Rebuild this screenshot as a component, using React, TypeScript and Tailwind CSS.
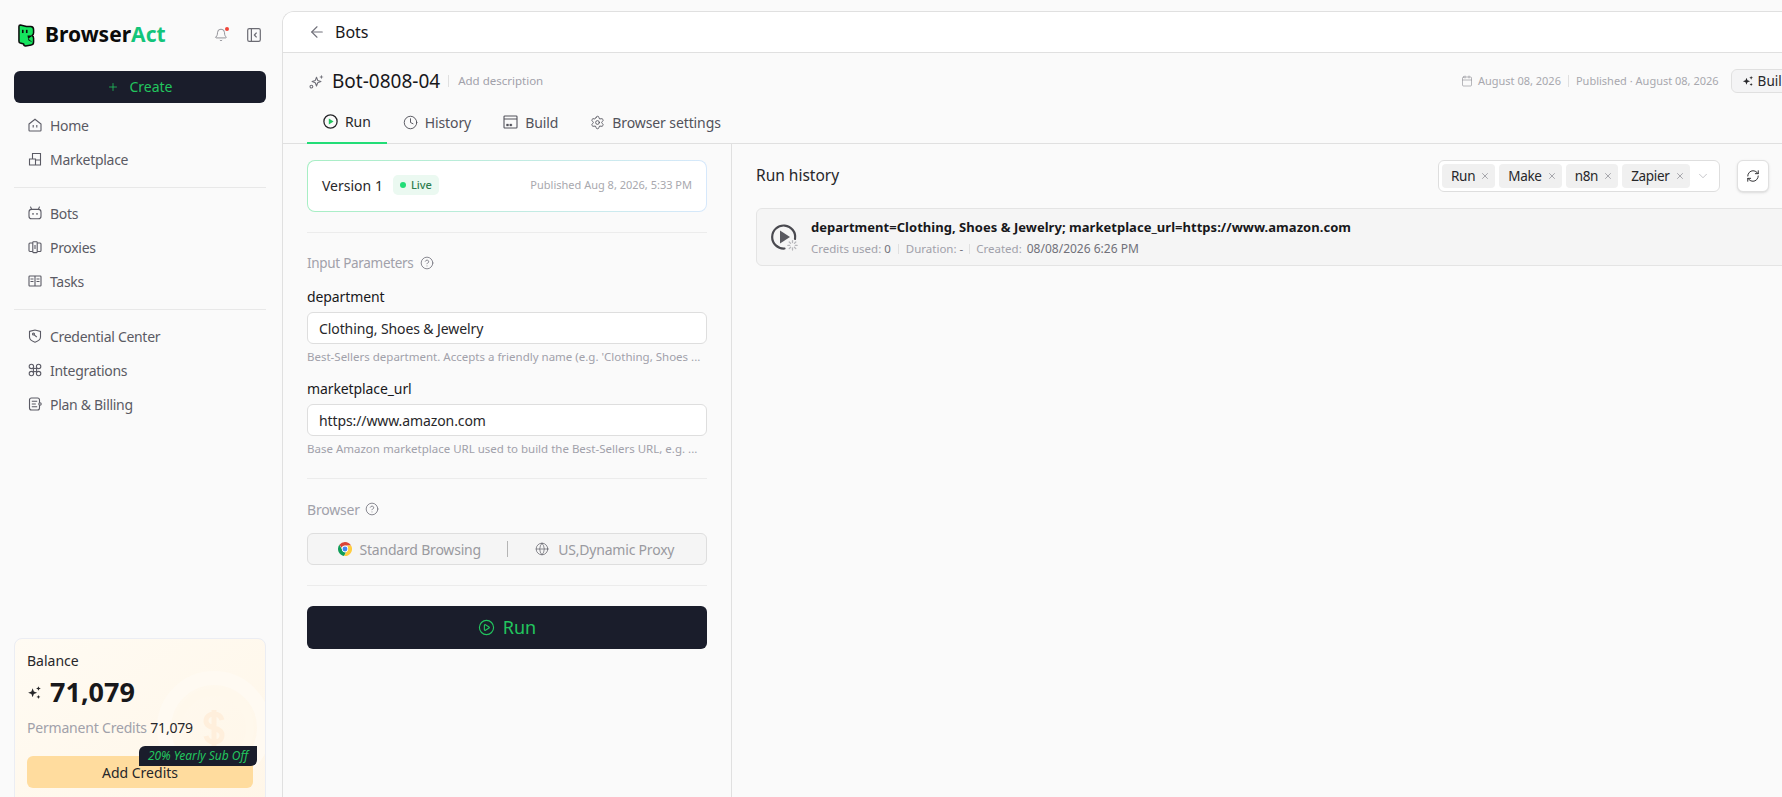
import {
  ArrowLeft,
  Bell,
  Calendar,
  ChevronDown,
  CircleHelp,
  CirclePlay,
  Clock,
  Globe,
  Plus,
  RefreshCw,
  Settings,
  X,
} from "lucide-react";

const Sparkle = ({ className }: { className?: string }) => (
  <svg viewBox="0 0 16 16" className={className} fill="currentColor">
    <path d="M6 3.5 7.3 7 10.8 8.3 7.3 9.6 6 13.1 4.7 9.6 1.2 8.3 4.7 7z" />
    <path d="M12.2 1.2 12.9 3 14.7 3.7 12.9 4.4 12.2 6.2 11.5 4.4 9.7 3.7 11.5 3z" />
    <path d="M12.2 10.6 12.8 12.1 14.3 12.7 12.8 13.3 12.2 14.8 11.6 13.3 10.1 12.7 11.6 12.1z" />
  </svg>
);

const BotSparkIcon = () => (
  <svg viewBox="0 0 15 15" className="w-[15px] h-[15px] text-[#71717a]" fill="none" stroke="currentColor" strokeWidth="1.1" strokeLinejoin="round">
    <path d="M7.5 3.2 8.7 6.4 11.9 7.6 8.7 8.8 7.5 12 6.3 8.8 3.1 7.6 6.3 6.4z" />
    <path d="M12.4.8 13 2.4 14.6 3 13 3.6 12.4 5.2 11.8 3.6 10.2 3 11.8 2.4z" fill="currentColor" stroke="none" />
    <circle cx="2.4" cy="12.6" r="1.4" />
  </svg>
);

const Logo = () => (
  <svg viewBox="0 0 18 24" className="w-[17px] h-[23px]">
    <path
      d="M2.5 1 L9 2.5 H13.5 Q16.5 2.5 16.5 6 V9 Q16.5 11 15 12 Q16.5 13 16.5 15 V19 Q16.5 22 14 22 L8 23 Q6 23 6 21 L2.5 20 Q1 19.5 1 18 V2.5 Q1 1 2.5 1Z"
      fill="#16e35e"
      stroke="#0b0b0b"
      strokeWidth="1.6"
      strokeLinejoin="round"
    />
    <rect x="4.2" y="6" width="1.7" height="3.4" fill="#0b0b0b" />
    <rect x="8.4" y="6" width="1.7" height="3.4" fill="#0b0b0b" />
    <path d="M10 12 L15.5 12 L11 15.5 L15.5 19.5 L11 17z" fill="#0b0b0b" />
  </svg>
);

const CollapseIcon = () => (
  <svg viewBox="0 0 14 14" className="w-[14px] h-[14px] text-[#6b6b73]" fill="none" stroke="currentColor" strokeWidth="1.2">
    <rect x="0.7" y="0.7" width="12.6" height="12.6" rx="1.6" />
    <path d="M4.4.7v12.6" />
    <path d="M9.6 4.6 7.4 7l2.2 2.4" />
  </svg>
);

const HomeIcon = () => (
  <svg viewBox="0 0 14 14" className="w-[14px] h-[14px]" fill="none" stroke="currentColor" strokeWidth="1.1">
    <path d="M1 6 7 1.2 13 6V12.2a.8.8 0 0 1-.8.8H1.8a.8.8 0 0 1-.8-.8z" />
    <path d="M5.2 7v2.4M8.8 7v2.4" />
  </svg>
);

const MarketIcon = () => (
  <svg viewBox="0 0 14 14" className="w-[14px] h-[14px]" fill="none" stroke="currentColor" strokeWidth="1.1">
    <path d="M4.5 1.5H12.5V13H1.5V7H4.5zM1.5 7H7.5V13M4.5 7V1.5M7.5 8H12.5" />
  </svg>
);

const BotIcon = () => (
  <svg viewBox="0 0 14 14" className="w-[14px] h-[14px]" fill="none" stroke="currentColor" strokeWidth="1.1">
    <rect x="1" y="3.4" width="12" height="9.4" rx="2.6" />
    <path d="M3.6 3.4 2.6 1M10.4 3.4l1-2.4" strokeLinecap="round" />
    <path d="M5 7v1.8M9 7v1.8" strokeWidth="1.3" />
  </svg>
);

const ProxyIcon = () => (
  <svg viewBox="0 0 14 14" className="w-[14px] h-[14px]" fill="none" stroke="currentColor" strokeWidth="1.1">
    <rect x="1" y="3" width="12" height="8.5" rx="1" />
    <rect x="4.8" y="1.8" width="4.4" height="10.8" rx="0.6" fill="#fafafa" />
    <path d="M7 5v4" />
  </svg>
);

const TasksIcon = () => (
  <svg viewBox="0 0 14 14" className="w-[14px] h-[14px]" fill="none" stroke="currentColor" strokeWidth="1.1">
    <rect x="1" y="2" width="12" height="10" rx="0.8" />
    <path d="M7 2v10M2.5 5h3M2.5 7.5h3M8.5 5h3M8.5 7.5h3" />
  </svg>
);

const ShieldIcon = () => (
  <svg viewBox="0 0 14 14" className="w-[14px] h-[14px]" fill="none" stroke="currentColor" strokeWidth="1.1">
    <path d="M1.5 2.4 7 1l5.5 1.4V8c0 2.6-2.6 4.2-5.5 5.2C4.1 12.2 1.5 10.6 1.5 8z" />
    <circle cx="5.5" cy="5" r="1" />
    <path d="M6.3 5.8 8.8 8.2" />
  </svg>
);

const IntegrationIcon = () => (
  <svg viewBox="0 0 14 14" className="w-[14px] h-[14px]" fill="none" stroke="currentColor" strokeWidth="1.1">
    <circle cx="3.4" cy="3.4" r="2.2" />
    <circle cx="10.6" cy="3.4" r="2.2" />
    <circle cx="3.4" cy="10.6" r="2.2" />
    <circle cx="10.6" cy="10.6" r="2.2" />
    <rect x="5.4" y="5.4" width="3.2" height="3.2" />
  </svg>
);

const BillingIcon = () => (
  <svg viewBox="0 0 14 14" className="w-[14px] h-[14px]" fill="none" stroke="currentColor" strokeWidth="1.1">
    <rect x="1.5" y="1" width="10" height="12" rx="2" />
    <path d="M3.8 4.2h5.4M3.8 7h4M3.8 9.8h5.4" />
    <circle cx="12" cy="7" r="1.2" fill="#fafafa" />
  </svg>
);

const BuildIcon = () => (
  <svg viewBox="0 0 15 14" className="w-[15px] h-[14px]" fill="none" stroke="currentColor" strokeWidth="1.1">
    <rect x="1" y="1" width="13" height="12" rx="0.8" />
    <path d="M1 4h13" />
    <path d="M3.5 9h2v2h-2zM6.8 9h2v2h-2z" fill="currentColor" strokeWidth="0.3" />
  </svg>
);

const RunTabIcon = () => (
  <svg viewBox="0 0 15 15" className="w-[15px] h-[15px]" fill="none">
    <circle cx="7.5" cy="7.5" r="6.6" stroke="#27272a" strokeWidth="1.3" />
    <path d="M5.8 4.6 10.6 7.5 5.8 10.4z" fill="#22c55e" />
  </svg>
);

const ChromeLogo = () => (
  <svg viewBox="0 0 16 16" className="w-[14px] h-[14px]">
    <path d="M8 0a8 8 0 0 1 6.93 4H8a4 4 0 0 0-3.75 2.6L1.6 3.2A8 8 0 0 1 8 0z" fill="#db4437" />
    <path d="M1.6 3.2 5 9.4A4 4 0 0 0 9.1 11.9L6.9 15.9A8 8 0 0 1 1.6 3.2z" fill="#0f9d58" />
    <path d="M14.93 4A8 8 0 0 1 6.9 15.9L10.4 9.6A4 4 0 0 0 10.8 5.2L10.5 4z" fill="#ffcd40" />
    <circle cx="8" cy="8" r="3.6" fill="#fff" />
    <circle cx="8" cy="8" r="2.8" fill="#4285f4" />
  </svg>
);

const RunStatusIcon = () => (
  <svg viewBox="0 0 28 28" className="w-[28px] h-[28px] shrink-0" fill="none">
    <path d="M24 16A11.5 11.5 0 1 0 13.5 25.5" stroke="#4a4a50" strokeWidth="2.2" strokeLinecap="round" />
    <path d="M9 7.6 19 14 9 20.4z" fill="#5a5a60" />
    <g stroke="#b8b8bc" strokeWidth="1.3" strokeLinecap="round">
      <path d="M21.5 17.6v2M21.5 25v2M16.8 22.3h2M24.2 22.3h2M18.2 19l1.4 1.4M23.4 24.2l1.4 1.4M18.2 25.6l1.4-1.4M23.4 20.4l1.4-1.4" />
    </g>
  </svg>
);

const navGroups = [
  {
    className: "pb-[11px] mb-[8px] border-b border-[#e8e8e8]",
    items: [
      { icon: <HomeIcon />, label: "Home" },
      { icon: <MarketIcon />, label: "Marketplace" },
    ],
  },
  {
    className: "pb-[11px] mb-[9px] border-b border-[#e8e8e8]",
    items: [
      { icon: <BotIcon />, label: "Bots" },
      { icon: <ProxyIcon />, label: "Proxies" },
      { icon: <TasksIcon />, label: "Tasks" },
    ],
  },
  {
    className: "",
    items: [
      { icon: <ShieldIcon />, label: "Credential Center" },
      { icon: <IntegrationIcon />, label: "Integrations" },
      { icon: <BillingIcon />, label: "Plan & Billing" },
    ],
  },
];

const tabs = [
  { icon: <Clock className="w-[15px] h-[15px]" strokeWidth={1.5} />, label: "History" },
  { icon: <BuildIcon />, label: "Build" },
  { icon: <Settings className="w-[15px] h-[15px]" strokeWidth={1.4} />, label: "Browser settings" },
];

const params = [
  {
    name: "department",
    value: "Clothing, Shoes & Jewelry",
    help: "Best-Sellers department. Accepts a friendly name (e.g. 'Clothing, Shoes ...",
    spacing: "mt-[13px]",
  },
  {
    name: "marketplace_url",
    value: "https://www.amazon.com",
    help: "Base Amazon marketplace URL used to build the Best-Sellers URL, e.g. ...",
    spacing: "mt-[13px]",
  },
];

const chips = ["Run", "Make", "n8n", "Zapier"];

export default function App() {
  return (
    <div className="flex w-[1782px] h-[797px] overflow-hidden bg-[#fafafa] text-[#18181b] font-['Noto_Sans',sans-serif]">
      {/* Sidebar */}
      <aside className="w-[282px] shrink-0 flex flex-col pl-[14px] pr-[16px] overflow-hidden">
        <div className="h-[71px] flex items-center pb-[1px] pl-[4px]">
          <Logo />
          <span className="ml-[10px] text-[21px] font-bold text-[#0b0b0b]">
            Browser<span className="text-[#12c47a]">Act</span>
          </span>
          <div className="relative ml-auto text-[#71717a]">
            <Bell className="w-[14px] h-[14px]" strokeWidth={1.3} />
            <span className="absolute -top-[1px] right-[-1px] w-[4px] h-[4px] rounded-full bg-[#f04438]" />
          </div>
          <span className="ml-[19px] mr-[5px]">
            <CollapseIcon />
          </span>
        </div>
        <button className="h-[32px] rounded-[6px] bg-[#1a1d2b] text-[#22c55e] text-[14px] flex items-center justify-center gap-[10px] pb-[1px]">
          <Plus className="w-[12px] h-[12px]" strokeWidth={1.6} />
          Create
        </button>
        <nav className="mt-[5px]">
          {navGroups.map((group, i) => (
            <div key={i} className={group.className}>
              {group.items.map((item) => (
                <div key={item.label} className="h-[34px] flex items-center pl-[14px] gap-[8px] text-[#5a5a64]">
                  <span className="w-[14px] flex justify-center">{item.icon}</span>
                  <span className="text-[14px] tracking-[-0.3px]">{item.label}</span>
                </div>
              ))}
            </div>
          ))}
        </nav>

        {/* Balance card */}
        <div className="relative mt-auto mb-[-10px] h-[169px] shrink-0 rounded-[8px] border border-[#ebedf3] bg-gradient-to-br from-[#fffbf3] to-[#fff6e8] px-[12px] pt-[12px] overflow-hidden">
          <svg viewBox="0 0 120 120" className="absolute left-[139px] top-[29px] w-[120px] h-[120px]" fill="none">
            <circle cx="60" cy="60" r="50" stroke="#fffaf2" strokeWidth="14" />
            <circle cx="60" cy="60" r="36" stroke="#fff8ec" strokeWidth="8" />
            <path d="M68 52c-1-4-4-6-8-6s-8 2-8 7c0 9 16 5 16 14 0 5-4 7-8 7s-7-2-8-6M60 42v36" stroke="#ffefdc" strokeWidth="5" />
          </svg>
          <div className="relative text-[14px] leading-[20px] text-[#27272a]">Balance</div>
          <div className="relative flex items-center gap-[8px] mt-[5px] h-[32px]">
            <Sparkle className="w-[15px] h-[15px] text-[#27272a]" />
            <span className="text-[27px] font-bold leading-[32px] text-[#18181b]">71,079</span>
          </div>
          <div className="relative mt-[10px] text-[14px] leading-[20px] text-[#a1a1aa] tracking-[-0.2px]">
            Permanent Credits <span className="text-[#27272a]">71,079</span>
          </div>
          <div className="relative mt-[18px] h-[32px] rounded-[6px] bg-[#ffdc9e] flex items-center justify-center text-[14px] text-[#27272a]">
            Add Credits
          </div>
          <div className="absolute left-[124px] top-[107px] h-[20px] w-[118px] rounded-tl-[6px] rounded-br-[6px] bg-[#1a1d2b] flex items-center justify-center text-[12px] italic text-[#22c55e] whitespace-nowrap">
            20% Yearly Sub Off
          </div>
        </div>
      </aside>

      {/* Main panel */}
      <main className="w-[1535px] shrink-0 mt-[11px] rounded-tl-[12px] border-t border-l border-[#e0e0e0] flex flex-col overflow-hidden">
        <header className="h-[41px] shrink-0 bg-white border-b border-[#e0e0e0] flex items-center pl-[25px] gap-[9px]">
          <ArrowLeft className="w-[18px] h-[18px] text-[#71717a]" strokeWidth={1.5} />
          <span className="text-[16px] text-[#18181b]">Bots</span>
        </header>

        <div className="shrink-0 border-b border-[#e0e0e0]">
          <div className="flex items-center h-[24px] mt-[16px] pl-[26px] pr-[16px]">
            <BotSparkIcon />
            <span className="ml-[8px] text-[19px] text-[#18181b]">Bot-0808-04</span>
            <span className="ml-[8px] h-[12px] border-l border-[#e0e0e0]" />
            <span className="ml-[9px] text-[11.5px] text-[#a1a1aa]">Add description</span>
            <div className="ml-auto flex items-center text-[11px] text-[#a8a8ae]">
              <Calendar className="w-[12px] h-[12px] mr-[5px] text-[#8a8a90]" strokeWidth={1.2} />
              <span>August 08, 2026</span>
              <span className="mx-[7px] h-[12px] border-l border-[#e0e0e0]" />
              <span>Published · August 08, 2026</span>
              <button className="ml-[12px] h-[24px] px-[10px] rounded-[6px] border border-[#e0e0e0] bg-[#f4f4f5] flex items-center gap-[4px] text-[13.5px] text-[#27272a]">
                <Sparkle className="w-[12px] h-[12px]" />
                Build
              </button>
            </div>
          </div>
          <div className="flex h-[39px] mt-[12px] pl-[24px] -mb-[1px]">
            <div className="px-[16px] pb-[5px] flex items-center gap-[7px] border-b-[2px] border-[#22dd77] text-[#27272a]">
              <RunTabIcon />
              <span className="text-[14px] tracking-[-0.1px]">Run</span>
            </div>
            {tabs.map((tab) => (
              <div key={tab.label} className="px-[16px] pb-[5px] flex items-center gap-[7px] text-[#52525b]">
                {tab.icon}
                <span className="text-[14px] tracking-[-0.1px]">{tab.label}</span>
              </div>
            ))}
          </div>
        </div>

        <div className="flex flex-1 min-h-0">
          {/* Left column */}
          <section className="w-[449px] shrink-0 border-r border-[#e0e0e0] px-[24px] pt-[16px]">
            <div className="h-[52px] rounded-[8px] bg-gradient-to-r from-[#a7eec4] to-[#d6e8fb] p-[1px]">
              <div className="h-full rounded-[7px] bg-white flex items-center px-[14px] pb-[2px]">
                <span className="text-[14px] text-[#27272a]">Version 1</span>
                <span className="ml-[10px] h-[20px] px-[7px] rounded-[5px] bg-[#ebf9f1] flex items-center gap-[5px] text-[11px] font-medium text-[#2e7d4f]">
                  <span className="w-[6px] h-[6px] rounded-full bg-[#22dd77]" />
                  Live
                </span>
                <span className="ml-auto text-[11px] text-[#a8a8ae]">Published Aug 8, 2026, 5:33 PM</span>
              </div>
            </div>

            <div className="mt-[20px] border-t border-[#ececec]" />

            <div className="mt-[20px] h-[20px] flex items-center gap-[6px] text-[13.5px] text-[#a1a1aa] tracking-[-0.3px]">
              Input Parameters
              <CircleHelp className="w-[14px] h-[14px] text-[#71717a]" strokeWidth={1.4} />
            </div>

            {params.map((p) => (
              <div key={p.name} className={p.spacing}>
                <div className="h-[20px] flex items-center text-[14px] text-[#18181b] tracking-[-0.1px]">{p.name}</div>
                <div className="mt-[6px] h-[32px] rounded-[6px] border border-[#dedede] bg-white flex items-center px-[11px] text-[14px] text-[#27272a] tracking-[-0.1px]">
                  {p.value}
                </div>
                <div className="mt-[5px] h-[16px] flex items-center text-[11.5px] text-[#a1a1aa] whitespace-nowrap overflow-hidden">
                  {p.help}
                </div>
              </div>
            ))}

            <div className="mt-[21px] border-t border-[#ececec]" />

            <div className="mt-[20px] h-[20px] flex items-center gap-[5px] text-[14px] text-[#a1a1aa] tracking-[-0.2px]">
              Browser
              <CircleHelp className="w-[14px] h-[14px] text-[#71717a]" strokeWidth={1.4} />
            </div>

            <div className="mt-[14px] h-[32px] rounded-[6px] border border-[#dedede] bg-[#f5f5f5] flex items-center text-[14px] text-[#9a9aa0] tracking-[-0.2px]">
              <div className="flex-1 flex items-center justify-center gap-[8px] pl-[4px]">
                <ChromeLogo />
                Standard Browsing
              </div>
              <span className="h-[16px] border-l border-[#b5b5b5]" />
              <div className="flex-1 flex items-center justify-center gap-[9px] pr-[4px]">
                <Globe className="w-[14px] h-[14px] text-[#52525b]" strokeWidth={1.1} />
                US,Dynamic Proxy
              </div>
            </div>

            <div className="mt-[20px] border-t border-[#ececec]" />

            <button className="mt-[20px] w-full h-[43px] rounded-[6px] bg-[#1a1d2b] flex items-center justify-center gap-[8px] text-[18px] text-[#22c55e]">
              <CirclePlay className="w-[17px] h-[17px]" strokeWidth={1.6} />
              Run
            </button>
          </section>

          {/* Right column */}
          <section className="flex-1 min-w-0 pl-[24px] pt-[16px]">
            <div className="w-[1013px] h-[32px] flex items-center">
              <span className="text-[15.5px] text-[#27272a]">Run history</span>
              <div className="ml-auto h-[32px] w-[282px] rounded-[6px] border border-[#dedede] bg-white flex items-center pl-[3px] gap-[4px]">
                {chips.map((c) => (
                  <span key={c} className="h-[24px] pl-[9px] pr-[5px] rounded-[4px] bg-[#f0f0f0] flex items-center gap-[5px] text-[13.5px] text-[#27272a] tracking-[-0.3px]">
                    {c}
                    <X className="w-[10px] h-[10px] text-[#71717a]" strokeWidth={1.4} />
                  </span>
                ))}
                <ChevronDown className="ml-auto mr-[9px] w-[14px] h-[14px] text-[#a8a8ae]" strokeWidth={1.1} />
              </div>
              <button className="ml-[17px] w-[32px] h-[32px] rounded-[6px] border border-[#e0e0e0] bg-white shadow-sm flex items-center justify-center">
                <RefreshCw className="w-[14px] h-[14px] text-[#27272a]" strokeWidth={1.6} />
              </button>
            </div>
            <div className="mt-[16px] w-[1060px] h-[58px] rounded-[6px] border border-[#e4e4e4] bg-[#f5f5f5] flex items-center pl-[14px] gap-[12px]">
              <RunStatusIcon />
              <div>
                <div className="text-[13px] font-bold leading-[18px] text-[#18181b] tracking-[0.03px]">
                  department=Clothing, Shoes &amp; Jewelry; marketplace_url=https://www.amazon.com
                </div>
                <div className="mt-[5px] flex items-center text-[11.5px] leading-[16px] text-[#a1a1aa]">
                  Credits used:&nbsp;<span className="text-[#71717a]">0</span>
                  <span className="mx-[7px] h-[10px] border-l border-[#e0e0e0]" />
                  Duration:&nbsp;<span className="text-[#71717a]">-</span>
                  <span className="mx-[6px] h-[10px] border-l border-[#e0e0e0]" />
                  Created:&nbsp;<span className="ml-[2px] text-[12px] text-[#71717a]">08/08/2026 6:26 PM</span>
                </div>
              </div>
            </div>
          </section>
        </div>
      </main>
    </div>
  );
}
